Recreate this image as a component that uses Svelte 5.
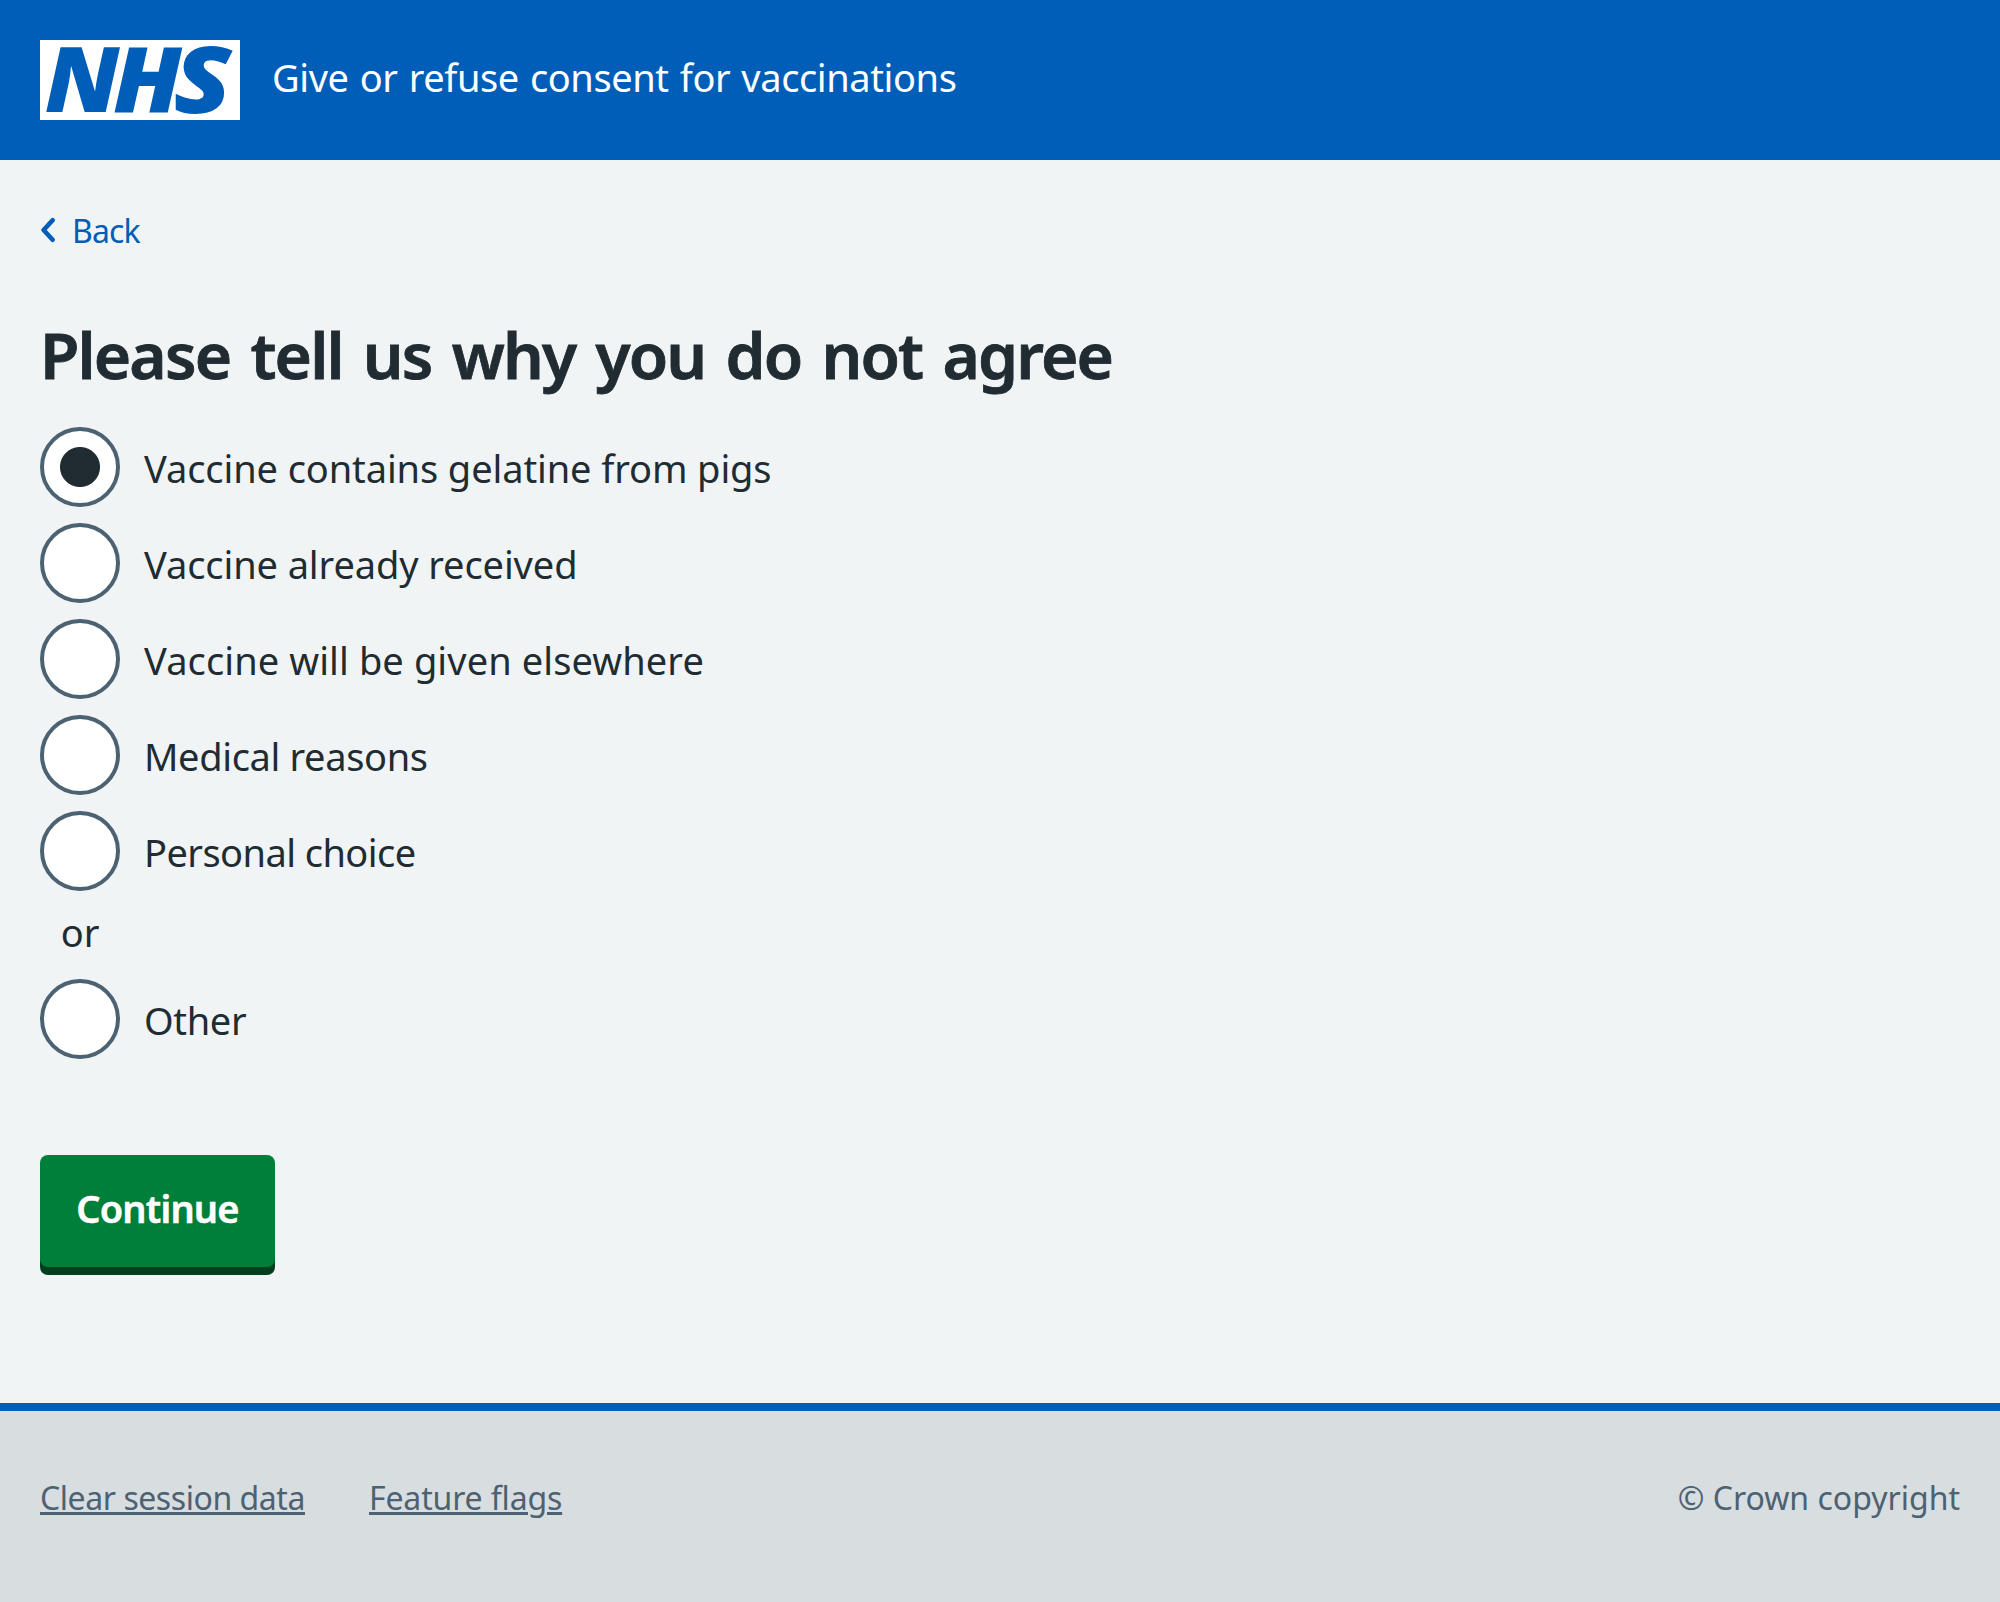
<script>
  const reasons = [
    { label: 'Vaccine contains gelatine from pigs', fit: 'fit-a' },
    { label: 'Vaccine already received', fit: 'fit-a' },
    { label: 'Vaccine will be given elsewhere', fit: 'fit-b' },
    { label: 'Medical reasons', fit: 'fit-c' },
    { label: 'Personal choice', fit: 'fit-d' },
    { label: 'Other', fit: 'fit-c' }
  ];
  let selected = $state(reasons[0].label);
</script>

<div class="page">
  <header class="header">
    <svg class="logo" viewBox="0 0 200 80" role="img" aria-label="NHS">
      <rect width="200" height="80" fill="#fff" />
      <g class="logo-text">
        <text transform="translate(4.7 72.3) scale(1.04 1)">N</text>
        <text transform="translate(73 72.3) scale(1.06 1)">H</text>
        <text transform="translate(133.4 72.5) scale(1.165 1.02)">S</text>
      </g>
    </svg>
    <span class="service">Give or refuse consent for vaccinations</span>
  </header>

  <main class="main">
    <a class="back" href="#back">
      <svg class="chevron" viewBox="0 0 16 26" aria-hidden="true">
        <path d="M12.6 3.2 3.6 13l9 9.8" fill="none" stroke="currentColor" stroke-width="4.6" stroke-linecap="round" stroke-linejoin="round" />
      </svg>
      <span>Back</span>
    </a>
    <h1 class="title">Please tell us why you do not agree</h1>
    <div class="radios">
      {#each reasons as reason}
        {#if reason.label === 'Other'}<div class="divider">or</div>{/if}
        <label class="radio">
          <input type="radio" name="reason" value={reason.label} bind:group={selected} />
          <span class={reason.fit}>{reason.label}</span>
        </label>
      {/each}
    </div>
    <button class="button" type="button">Continue</button>
  </main>

  <footer class="footer">
    <nav class="links">
      <a class="clear" href="#clear">Clear session data</a>
      <a class="flags" href="#flags">Feature flags</a>
    </nav>
    <span class="copyright">© Crown copyright</span>
  </footer>
</div>

<style>
  :global(body) { margin: 0; background: #d8dde0; }
  .page {
    display: flex;
    flex-direction: column;
    min-height: 1602px;
    box-sizing: border-box;
    background: #f0f4f5;
    color: #212b32;
    font-family: "Noto Sans", "Open Sans", sans-serif;
    font-size: 38px;
  }
  .header {
    display: flex;
    align-items: center;
    gap: 32px;
    height: 160px;
    padding: 0 40px;
    box-sizing: border-box;
    background: #005eb8;
    color: #fff;
  }
  .logo { display: block; width: 200px; height: 80px; overflow: visible; }
  .logo-text { fill: #005eb8; font: italic 800 91px "Open Sans", sans-serif; }
  .service { padding-bottom: 6px; line-height: 56px; letter-spacing: -0.4px; word-spacing: 1.6px; }
  .main { flex: 1; padding: 47px 40px 0; }
  .back {
    display: flex;
    width: max-content;
    gap: 16px;
    font-size: 32px;
    line-height: 48px;
    letter-spacing: -0.9px;
    color: #005eb8;
    text-decoration: none;
  }
  .chevron { width: 16px; height: 26px; margin-top: 10px; }
  .title {
    margin: 64px 0 36px;
    font-size: 64px;
    line-height: 72px;
    font-weight: 600;
    letter-spacing: -1.85px;
    word-spacing: 5.4px;
    -webkit-text-stroke: 0.8px currentColor;
  }
  .radio { display: flex; gap: 24px; height: 80px; margin-bottom: 16px; }
  .radio input {
    appearance: none;
    width: 80px;
    height: 80px;
    margin: 0;
    border: 4px solid #4c6272;
    border-radius: 50%;
    background: #fff;
  }
  .radio input:checked { background: radial-gradient(circle, #212b32 19.5px, #fff 20.5px); }
  .radio span { padding-top: 1px; line-height: 80px; }
  .fit-a { letter-spacing: -0.1px; }
  .fit-b { letter-spacing: 0.1px; }
  .fit-c { letter-spacing: -0.35px; }
  .fit-d { letter-spacing: -0.56px; }
  .divider { width: 80px; margin: -3px 0 19px; line-height: 56px; text-align: center; }
  .button {
    display: block;
    width: 235px;
    height: 112px;
    margin-top: 96px;
    padding: 0 0 6px;
    border: 0;
    border-radius: 8px;
    background: #007f3b;
    box-shadow: 0 8px 0 #00401e;
    color: #fff;
    font: inherit;
    font-weight: 600;
    letter-spacing: -0.8px;
    -webkit-text-stroke: 0.5px currentColor;
  }
  .footer {
    display: flex;
    justify-content: space-between;
    height: 199px;
    padding: 63px 40px 0;
    box-sizing: border-box;
    border-top: 8px solid #005eb8;
    background: #d8dde0;
    color: #4c6272;
    font-size: 32px;
    line-height: 48px;
  }
  .links { display: flex; gap: 64px; }
  .links a { color: inherit; text-decoration-thickness: 3px; text-underline-offset: 2px; }
  .clear { letter-spacing: -0.44px; }
  .flags { letter-spacing: -0.15px; }
</style>
